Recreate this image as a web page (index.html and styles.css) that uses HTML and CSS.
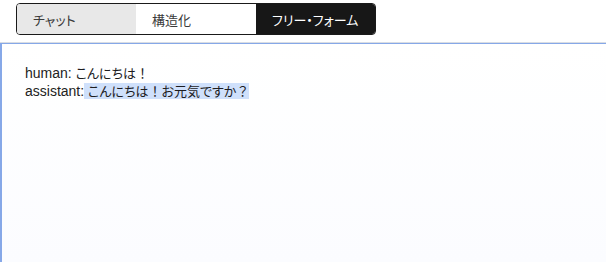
FILE: index.html
```html
<!DOCTYPE html>
<html>
<head>
  <meta charset="utf-8" />
  <title>フリー・フォーム</title>
  <link rel="stylesheet" href="styles.css">
</head>
<body>
  <!-- モード切替 -->
  <div class="mode-switch">
    <button class="mode-btn active-soft">チャット</button>
    <button class="mode-btn">構造化</button>
    <button class="mode-btn selected">フリー・フォーム</button>
  </div>

  <!-- 会話ログ -->
  <div class="log-panel">
    <div class="log-line"><span class="role">human:</span> <span class="ja">こんにちは<span class="wide">！</span></span></div>
    <div class="log-line"><span class="role">assistant:</span><span class="reply"> <span class="ja">こんにちは<span class="wide">！</span>お元気ですか<span class="wide">？</span></span></span></div>
  </div>
</body>
</html>
```

FILE: styles.css
```css
* {
  margin: 0;
  padding: 0;
  box-sizing: border-box;
}

body {
  font-family: "Liberation Sans", "Noto Sans CJK JP", sans-serif;
  font-size: 14px;
  color: #1d1d1f;
  background: white;
  height: 100vh;
  display: flex;
  flex-direction: column;
}

.mode-switch {
  display: flex;
  width: 360px;
  height: 32px;
  margin: 3px 0 0 16px;
  border: 1px solid #1a1a1a;
  border-radius: 4px;
  overflow: hidden;
}

.mode-btn {
  width: 120px;
  flex: none;
  background: white;
  border: none;
  text-align: left;
  padding-left: 16px;
  font-family: "Noto Sans CJK JP", sans-serif;
  font-feature-settings: "palt";
  font-size: 13px;
  color: #3a3a3a;
}

.mode-btn.active-soft {
  background: #e8e8e8;
  width: 119px;
}

.mode-btn.selected {
  background: #171717;
  color: white;
}

.log-panel {
  flex: 1;
  margin-top: 7px;
  border-top: 1px solid #d9dde3;
  box-shadow: inset 0 1px 0 #86a8e8, inset 2px 0 0 #86a8e8;
  background: linear-gradient(to bottom, #ffffff, #fbfcff);
  padding: 21px 25px;
}

.log-line {
  line-height: 17px;
  white-space: pre;
}

.ja {
  font-family: "Noto Sans CJK JP", sans-serif;
  font-size: 13px;
  font-feature-settings: "palt";
}

.wide {
  font-feature-settings: normal;
}

.role {
  color: #222;
}

.reply {
  background: #cfe0fb;
}
```
